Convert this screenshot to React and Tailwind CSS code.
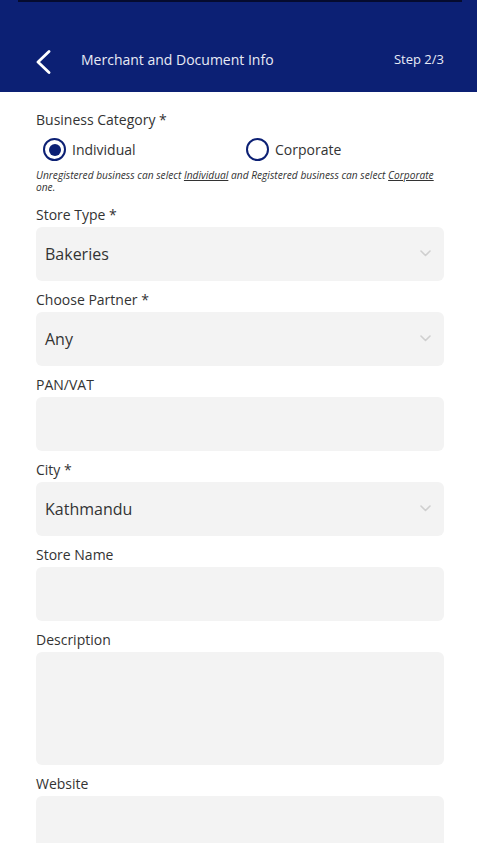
import React from 'react';

const font = { fontFamily: '"Open Sans", "Liberation Sans", sans-serif' };

const SelectBox = ({ value }) => (
  <div className="h-[54px] rounded-md bg-[#f3f3f3] flex items-center justify-between pl-[9px] pr-[13px]">
    <span className="text-[16px] text-[#333]">{value}</span>
    <svg width="11" height="7" viewBox="0 0 11 7" fill="none" className="mt-[-2px]">
      <polyline points="1,1 5.5,5.5 10,1" stroke="#cfcfcf" strokeWidth="1.6" strokeLinecap="round" strokeLinejoin="round" />
    </svg>
  </div>
);

const Field = ({ label, children }) => (
  <div className="mb-[10px]">
    <p className="text-[14px] leading-[18px] text-[#333] mb-[3px]">{label}</p>
    {children}
  </div>
);

const Radio = ({ checked, label }) => (
  <div className="flex items-center gap-[6px]">
    <div className="w-[23px] h-[23px] rounded-full border-[2.5px] border-[#0c2074] flex items-center justify-center">
      {checked ? <div className="w-[12px] h-[12px] rounded-full bg-[#0c2074]" /> : null}
    </div>
    <span className="text-[14px] text-[#333]">{label}</span>
  </div>
);

export default function App() {
  return (
    <div className="min-h-screen bg-white" style={font}>
      <div className="h-[92px] bg-[#0c2074] relative">
        <div className="absolute left-[18px] right-[15px] top-0 h-[2px] bg-[#050b2e]" />
        <div className="flex items-center pt-[50px] pl-[36px] pr-[33px]">
          <svg width="15" height="24" viewBox="0 0 15 24" fill="none">
            <polyline points="13,1.5 2,12 13,22.5" stroke="white" strokeWidth="2.8" strokeLinecap="round" strokeLinejoin="round" />
          </svg>
          <h1 className="ml-[30px] text-[14px] text-[#e8ebf5] flex-1 mt-[-6px]">Merchant and Document Info</h1>
          <span className="text-[13px] text-[#e8ebf5] mt-[-4px]">Step 2/3</span>
        </div>
      </div>

      <div className="pl-[36px] pr-[33px] pt-[19px]">
        <p className="text-[14px] leading-[18px] text-[#333]">Business Category *</p>
        <div className="flex items-center mt-[9px] pl-[7px]">
          <div className="w-[203px]">
            <Radio checked label="Individual" />
          </div>
          <Radio label="Corporate" />
        </div>
        <p className="mt-[8px] text-[10.2px] leading-[12px] italic text-[#333]">
          Unregistered business can select <span className="underline">Individual</span> and Registered business can select <span className="underline">Corporate</span> one.
        </p>

        <div className="mt-[13px]">
          <Field label="Store Type *">
            <SelectBox value="Bakeries" />
          </Field>
          <Field label="Choose Partner *">
            <SelectBox value="Any" />
          </Field>
          <Field label="PAN/VAT">
            <div className="h-[54px] rounded-md bg-[#f3f3f3]" />
          </Field>
          <Field label="City *">
            <SelectBox value="Kathmandu" />
          </Field>
          <Field label="Store Name">
            <div className="h-[54px] rounded-md bg-[#f3f3f3]" />
          </Field>
          <Field label="Description">
            <div className="h-[113px] rounded-md bg-[#f3f3f3]" />
          </Field>
          <Field label="Website">
            <div className="h-[54px] rounded-md bg-[#f3f3f3]" />
          </Field>
        </div>
      </div>
    </div>
  );
}
